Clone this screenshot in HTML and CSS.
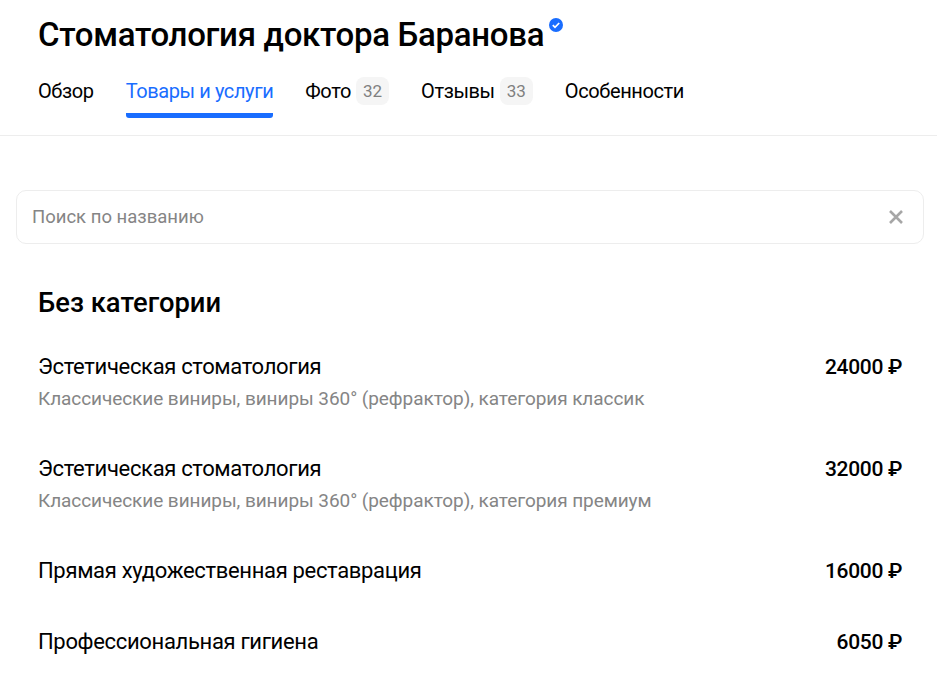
FILE: index.html
```html
<!DOCTYPE html>
<html lang="ru">
<head>
    <meta charset="UTF-8">
    <title>Стоматология доктора Баранова</title>
    <link rel="stylesheet" href="styles.css">
</head>
<body>
<div class="header">
    <h1 class="title">Стоматология доктора Баранова<svg class="verified" viewBox="0 0 14 14" width="14" height="14"><circle cx="7" cy="7" r="7" fill="#196dff"/><path d="M3.8 7.2l2.2 2.2 4.2-4.4" fill="none" stroke="#fff" stroke-width="1.7"/></svg></h1>
    <div class="tabs">
        <div class="tab">Обзор</div>
        <div class="tab active">Товары и услуги</div>
        <div class="tab">Фото <span class="count">32</span></div>
        <div class="tab">Отзывы <span class="count">33</span></div>
        <div class="tab">Особенности</div>
    </div>
</div>
<div class="search">
    <span class="searchText">Поиск по названию</span>
    <svg class="clear" viewBox="0 0 14 14" width="14" height="14"><path d="M1 1l12 12M13 1L1 13" stroke="#a6a6a6" stroke-width="2.6" fill="none"/></svg>
</div>
<div class="services">
    <h2 class="category">Без категории</h2>
    <div class="service">
        <div class="serviceRow"><span>Эстетическая стоматология</span><span class="price">24000 ₽</span></div>
        <div class="serviceDesc">Классические виниры, виниры 360° (рефрактор), категория классик</div>
    </div>
    <div class="service">
        <div class="serviceRow"><span>Эстетическая стоматология</span><span class="price">32000 ₽</span></div>
        <div class="serviceDesc">Классические виниры, виниры 360° (рефрактор), категория премиум</div>
    </div>
    <div class="service">
        <div class="serviceRow"><span>Прямая художественная реставрация</span><span class="price">16000 ₽</span></div>
    </div>
    <div class="service">
        <div class="serviceRow"><span>Профессиональная гигиена</span><span class="price">6050 ₽</span></div>
    </div>
</div>
</body>
</html>
```
FILE: styles.css
```css
html{
    height: 100%;
    overflow: hidden;
}
body{
    margin: 0;
    background-color: white;
    color: black;
    font-family: 'Roboto', 'Liberation Sans', sans-serif;
}
.header{
    height: 136px;
    box-sizing: border-box;
    padding: 14px 38px 0;
    border-bottom: 1px solid #ededed;
}
.title{
    margin: 0;
    font-size: 33px;
    letter-spacing: -0.3px;
    line-height: 42px;
    font-weight: 500;
    display: flex;
    align-items: flex-start;
}
.verified{
    margin: 4px 0 0 5px;
}
.tabs{
    display: flex;
    gap: 32px;
    margin-top: 21px;
}
.tab{
    display: flex;
    align-items: center;
    gap: 5px;
    height: 28px;
    padding-bottom: 13px;
    font-size: 20px;
    letter-spacing: -0.4px;
}
.tab.active{
    color: #196dff;
    border-bottom: 5px solid #196dff;
    border-radius: 0 0 3px 3px;
    padding-bottom: 8px;
}
.count{
    font-size: 17px;
    letter-spacing: 0;
    color: #808080;
    background-color: #f5f5f5;
    border-radius: 8px;
    padding: 4px 7px;
}
.search{
    display: flex;
    justify-content: space-between;
    align-items: center;
    box-sizing: border-box;
    height: 54px;
    margin: 54px 13px 0 16px;
    padding: 0 20px 0 15px;
    border: 1px solid #ededed;
    border-radius: 10px;
}
.searchText{
    font-size: 18.5px;
    color: #858585;
}
.services{
    padding: 43px 35px 0 38px;
}
.category{
    margin: 0 0 35px;
    font-size: 27.4px;
    line-height: 32px;
    font-weight: 500;
}
.service{
    margin-bottom: 45px;
}
.serviceRow{
    display: flex;
    justify-content: space-between;
    font-size: 22px;
    letter-spacing: -0.33px;
    line-height: 26px;
}
.price{
    font-size: 21px;
    font-weight: 500;
}
.serviceDesc{
    margin-top: 7px;
    font-size: 19px;
    letter-spacing: -0.07px;
    line-height: 24px;
    color: #858585;
}
```
